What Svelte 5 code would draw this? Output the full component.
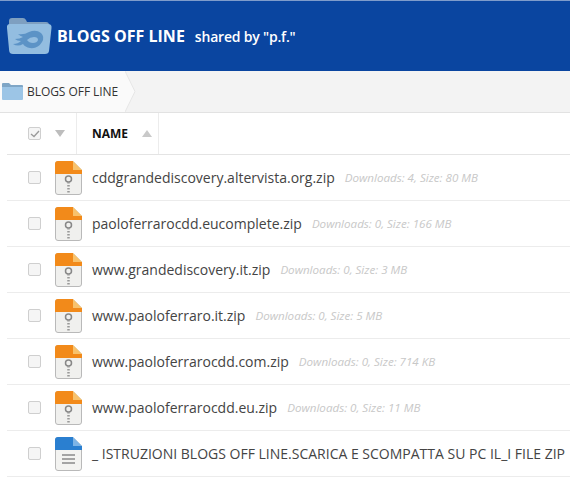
<script>
  const files = [
    { name: 'cddgrandediscovery.altervista.org.zip', meta: 'Downloads: 4, Size: 80 MB', type: 'zip' },
    { name: 'paoloferrarocdd.eucomplete.zip', meta: 'Downloads: 0, Size: 166 MB', type: 'zip' },
    { name: 'www.grandediscovery.it.zip', meta: 'Downloads: 0, Size: 3 MB', type: 'zip' },
    { name: 'www.paoloferraro.it.zip', meta: 'Downloads: 0, Size: 5 MB', type: 'zip' },
    { name: 'www.paoloferrarocdd.com.zip', meta: 'Downloads: 0, Size: 714 KB', type: 'zip' },
    { name: 'www.paoloferrarocdd.eu.zip', meta: 'Downloads: 0, Size: 11 MB', type: 'zip' },
    { name: '_ ISTRUZIONI BLOGS OFF LINE.SCARICA E SCOMPATTA SU PC IL_I FILE ZIP', meta: '', type: 'doc' }
  ];
</script>

<div class="page">
  <header class="top">
    <svg class="logo" width="46" height="38" viewBox="0 0 46 38">
      <path d="M3 8 V4 Q3 1 6 1 H17 Q19 1 20 3 L21 5 H40 Q43 5 43 8 V10 H3 Z" fill="#7e9fc0"/>
      <path d="M1 11 Q0.500 7 4 7 H42 Q46 7 45.500 11 L43 34 Q42.700 37 39 37 H7 Q3.500 37 3.200 34 Z" fill="#93bde0"/>
      <path d="M7 27 Q12 27 15 24 Q11 24 9 22 Q14 22 17 20 Q14 19 12 17 Q18 18 23 15 Q30 12 35 16 Q39 20 36 25 Q32 32 24 31 Q19 30 17 27 Q12 30 7 27 Z M21 23 Q24 20 28 20 Q32 20 32 23 Q31 26 27 26 Q23 26 21 23 Z" fill="#5c93c6" fill-rule="evenodd"/>
    </svg>
    <strong class="title">BLOGS OFF LINE</strong>
    <span class="shared">shared by "p.f."</span>
  </header>

  <nav class="crumbs">
    <div class="crumb">
      <svg width="21" height="17" viewBox="0 0 21 17">
        <path d="M0 3 V1 Q0 0 1 0 H7 L9 2 H20 Q21 2 21 3 V5 H0 Z" fill="#7fa6c6"/>
        <path d="M0 4 H21 V16 Q21 17 20 17 H1 Q0 17 0 16 Z" fill="#9cc5e6"/>
      </svg>
      <span>BLOGS OFF LINE</span>
    </div>
    <svg class="chev" width="11" height="41" viewBox="0 0 11 41">
      <path d="M0 0 L10 20.500 L0 41 Z" fill="#fafafa"/>
      <path d="M0 0 L10 20.500 L0 41" fill="none" stroke="#e6e6e6"/>
    </svg>
  </nav>

  <div class="head">
    <div class="head-check">
      <span class="box checked">
        <svg width="10" height="8" viewBox="0 0 10 8"><path d="M1 4 L4 6.500 L9 1" fill="none" stroke="#9a9a9a" stroke-width="1.300"/></svg>
      </span>
      <span class="tri down"></span>
    </div>
    <div class="head-name">
      <span>NAME</span>
      <span class="tri up"></span>
    </div>
  </div>

  <ul class="list">
    {#each files as f}
      <li class="row">
        <span class="box"></span>
        {#if f.type === 'zip'}
          <svg class="ficon" width="27" height="34" viewBox="0 0 27 34">
            <path d="M3 .5 H18 L26.500 9 V31 Q26.500 33.500 24 33.500 H3 Q.5 33.500 .5 31 V3 Q.5 .5 3 .5 Z" fill="#f0f0ee" stroke="#b9b9b9"/>
            <path d="M3 0 H18 L18 9 H27 V13 H0 V3 Q0 0 3 0 Z" fill="#f28a1a"/>
            <path d="M18 0 L27 9 H18 Z" fill="#f8c26c"/>
            <circle cx="13.500" cy="18" r="3" fill="none" stroke="#888" stroke-width="1.500"/>
            <path d="M13.500 21 V32" stroke="#999" stroke-width="2.500" stroke-dasharray="1.500 1.500"/>
          </svg>
        {:else}
          <svg class="ficon" width="27" height="34" viewBox="0 0 27 34">
            <path d="M3 .5 H18 L26.500 9 V31 Q26.500 33.500 24 33.500 H3 Q.5 33.500 .5 31 V3 Q.5 .5 3 .5 Z" fill="#f3f3f1" stroke="#b9b9b9"/>
            <path d="M3 0 H18 L18 9 H27 V13 H0 V3 Q0 0 3 0 Z" fill="#2a7fd0"/>
            <path d="M18 0 L27 9 H18 Z" fill="#7db4e6"/>
            <path d="M7 18 H20 M7 22 H20 M7 26 H20" stroke="#8a8a8a" stroke-width="1.500"/>
          </svg>
        {/if}
        <span class="name">{f.name}</span>
        {#if f.meta}<em class="meta">{f.meta}</em>{/if}
      </li>
    {/each}
  </ul>
</div>

<style>
  :global(body) { margin: 0; background: #fff; }
  .page { width: 570px; height: 491px; overflow: hidden; font-family: "Open Sans", sans-serif; }
  .top {
    background: #0a45a0; border-top: 1px solid #7f9ccb; box-sizing: border-box;
    height: 71px; display: flex; align-items: center; padding: 0 0 0 6px; color: #fff;
  }
  .logo { margin-right: 5px; }
  .title { font-size: 16px; font-weight: 700; letter-spacing: 0; }
  .shared { font-size: 14px; margin-left: 10px; font-weight: 600; letter-spacing: -.2px; }
  .crumbs { height: 41px; background: #f3f3f3; border-bottom: 1px solid #e2e2e2; display: flex; }
  .crumb { background: #fafafa; width: 125px; display: flex; align-items: center; padding-left: 2px; box-sizing: border-box; }
  .crumb span { font-size: 12px; color: #333; margin-left: 4px; letter-spacing: -.05px; }
  .chev { display: block; }
  .head { height: 41px; margin-left: 7px; border-bottom: 1px solid #e4e4e4; display: flex; }
  .head-check { width: 70px; border-right: 1px solid #ececec; display: flex; align-items: center; padding-left: 21px; box-sizing: border-box; }
  .head-name { width: 82px; border-right: 1px solid #ececec; display: flex; align-items: center; padding-left: 15px; box-sizing: border-box; font-size: 12px; font-weight: 700; color: #111; }
  .box {
    width: 11px; height: 11px; border: 1px solid #cfcfcf; border-radius: 2px; background: #f5f5f5;
    display: inline-flex; align-items: center; justify-content: center; flex: none;
  }
  .tri { width: 0; height: 0; border-left: 5px solid transparent; border-right: 5px solid transparent; }
  .down { border-top: 7px solid #bdbdbd; margin-left: 14px; }
  .up { border-bottom: 7px solid #c9c9c9; margin-left: 14px; }
  .list { list-style: none; margin: 0; padding: 0; }
  .row {
    height: 46px; margin-left: 7px; border-bottom: 1px solid #ececec; box-sizing: border-box;
    display: flex; align-items: center; padding-left: 21px;
  }
  .ficon { margin-left: 14px; margin-top: 1px; flex: none; }
  .name { margin-left: 10px; font-size: 14px; color: #444; white-space: nowrap; }
  .meta { margin-left: 10px; font-size: 11.600px; font-weight: 400; color: #c8c8c8; white-space: nowrap; }
</style>
